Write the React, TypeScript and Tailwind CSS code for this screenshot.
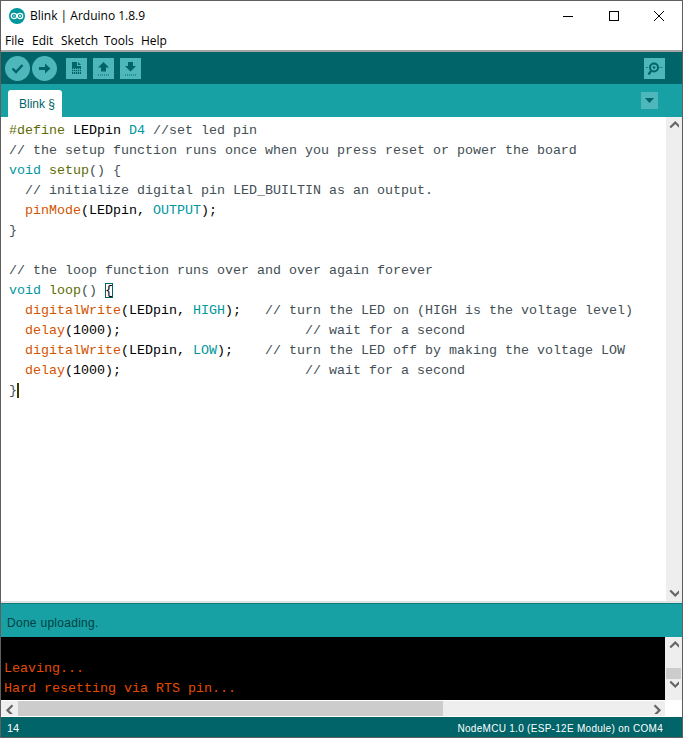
import type { ReactNode } from "react";

const kw = "text-[#00979c]";
const fn = "text-[#d35400]";
const ty = "text-[#5e6d03]";
const cm = "text-[#434f54]";

function K({ c, children }: { c: string; children: ReactNode }) {
  return <span className={c}>{children}</span>;
}

function Logo() {
  return (
    <svg width="16" height="16" viewBox="0 0 16 16">
      <circle cx="8" cy="8" r="8" fill="#00979c" />
      <circle cx="5" cy="8" r="2.7" fill="none" stroke="#fff" strokeWidth="1.2" />
      <circle cx="11" cy="8" r="2.7" fill="none" stroke="#fff" strokeWidth="1.2" />
      <path d="M4 8h2M10 8h2M11 7v2" stroke="#fff" strokeWidth="0.8" />
    </svg>
  );
}

function ToolCircle({ children }: { children: ReactNode }) {
  return (
    <div className="flex h-[25px] w-[25px] items-center justify-center rounded-full bg-[#4db7bb]">
      {children}
    </div>
  );
}

function ToolSquare({ children }: { children: ReactNode }) {
  return <div className="flex h-[21px] w-[21px] items-center justify-center bg-[#4db7bb]">{children}</div>;
}

function ArrowUpDown({ down }: { down?: boolean }) {
  return (
    <svg width="13" height="15" viewBox="0 0 13 15" fill="#006468">
      {down ? <path d="M4 1h5v4h3l-5.500 5.500L1 5h3z" /> : <path d="M6.500 1 12 6.500H9v4H4v-4H1z" />}
      <path d="M1 14h11" stroke="#006468" strokeDasharray="1 1" fill="none" />
    </svg>
  );
}

function Chevron({ dir }: { dir: "up" | "down" | "left" | "right" }) {
  const d = {
    up: "M1 6 5 2l4 4",
    down: "M1 2l4 4 4-4",
    left: "M6 1 2 5l4 4",
    right: "M2 1l4 4-4 4",
  }[dir];
  return (
    <svg width="10" height="10" viewBox="0 0 8 8" className="shrink-0">
      <path d={d} fill="none" stroke="#666" strokeWidth="1.800" />
    </svg>
  );
}

const lines: ReactNode[] = [
  <>
    <K c={ty}>#define</K> LEDpin <K c={kw}>D4</K> <K c={cm}>//set led pin</K>
  </>,
  <K c={cm}>// the setup function runs once when you press reset or power the board</K>,
  <>
    <K c={kw}>void</K> <K c={ty}>setup</K>
    <K c={cm}>() {"{"}</K>
  </>,
  <K c={cm}>  // initialize digital pin LED_BUILTIN as an output.</K>,
  <>
    {"  "}
    <K c={fn}>pinMode</K>(LEDpin, <K c={kw}>OUTPUT</K>);
  </>,
  <K c={cm}>{"}"}</K>,
  " ",
  <K c={cm}>// the loop function runs over and over again forever</K>,
  <>
    <K c={kw}>void</K> <K c={ty}>loop</K>
    <K c={cm}>() </K>
    <span className="outline outline-1 -outline-offset-1 outline-[#006468]">{"{"}</span>
  </>,
  <>
    {"  "}
    <K c={fn}>digitalWrite</K>(LEDpin, <K c={kw}>HIGH</K>);{"   "}
    <K c={cm}>// turn the LED on (HIGH is the voltage level)</K>
  </>,
  <>
    {"  "}
    <K c={fn}>delay</K>(1000);{"                       "}
    <K c={cm}>// wait for a second</K>
  </>,
  <>
    {"  "}
    <K c={fn}>digitalWrite</K>(LEDpin, <K c={kw}>LOW</K>);{"    "}
    <K c={cm}>// turn the LED off by making the voltage LOW</K>
  </>,
  <>
    {"  "}
    <K c={fn}>delay</K>(1000);{"                       "}
    <K c={cm}>// wait for a second</K>
  </>,
  <span className="border-r-2 border-[#3c3c00]">
    <K c={cm}>{"}"}</K>
  </span>,
];

export default function App() {
  return (
    <div className="flex h-[738px] w-[683px] flex-col overflow-hidden border border-[#5f5f5f] bg-white font-['Open_Sans','Noto_Sans',sans-serif]">
      {/* title bar */}
      <div className="flex h-[29px] shrink-0 items-center">
        <div className="ml-[8px] flex items-center gap-[5px]">
          <Logo />
          <span className="text-[12px] text-black">Blink | Arduino 1.8.9</span>
        </div>
        <div className="ml-auto flex items-center">
          <div className="flex w-[46px] justify-center">
            <svg width="10" height="10" viewBox="0 0 10 10"><path d="M0 5.500h10" stroke="#000" /></svg>
          </div>
          <div className="flex w-[45px] justify-center">
            <svg width="10" height="10" viewBox="0 0 10 10"><rect x=".5" y=".5" width="9" height="9" fill="none" stroke="#000" /></svg>
          </div>
          <div className="flex w-[46px] justify-center pr-[1px]">
            <svg width="10" height="10" viewBox="0 0 10 10"><path d="M0 0l10 10M10 0 0 10" stroke="#000" /></svg>
          </div>
        </div>
      </div>

      {/* menu */}
      <div className="flex h-[20px] shrink-0 items-center pl-[4px] pt-[2px] text-[12px] text-black">
        <span className="w-[27px]">File</span>
        <span className="w-[29px]">Edit</span>
        <span className="w-[43px]">Sketch</span>
        <span className="w-[37px]">Tools</span>
        <span>Help</span>
      </div>
      <div className="h-[2px] shrink-0 bg-[#a5a5a5]" />

      {/* toolbar */}
      <div className="flex h-[32px] shrink-0 items-center bg-[#006468] pl-[4px] pr-[16px]">
        <div className="flex gap-[2px]">
          <ToolCircle>
            <svg width="13" height="11" viewBox="0 0 13 11"><path d="M1.500 5.500 5 9l6.500-7" fill="none" stroke="#006468" strokeWidth="2.400" /></svg>
          </ToolCircle>
          <ToolCircle>
            <svg width="13" height="11" viewBox="0 0 13 11" fill="#006468"><path d="M1 4h6V.5l5.500 5L7 10.500V7H1z" /></svg>
          </ToolCircle>
        </div>
        <div className="ml-[9px] flex gap-[6px]">
          <ToolSquare>
            <svg width="13" height="16" viewBox="0 0 13 16">
              <path d="M2 2h5v4h4v8H2z" fill="#006468" />
              <path d="M8 2l3 3H8z" fill="#006468" />
              <path d="M3.500 8v6M5.500 8v6M7.500 8v6M9.500 8v6M2 9.500h9M2 11.500h9" stroke="#4db7bb" strokeWidth=".7" />
            </svg>
          </ToolSquare>
          <ToolSquare>
            <ArrowUpDown />
          </ToolSquare>
          <ToolSquare>
            <ArrowUpDown down />
          </ToolSquare>
        </div>
        <div className="ml-auto -translate-x-[1px]">
          <ToolSquare>
            <svg width="17" height="15" viewBox="0 0 17 15">
              <circle cx="8" cy="6.500" r="4" fill="none" stroke="#006468" strokeWidth="2" />
              <circle cx="8" cy="6.500" r="1.300" fill="#006468" />
              <path d="M5 10 2.500 13.500" stroke="#006468" strokeWidth="2.200" />
              <path d="M0 6.500h1.500M13.500 6.500h1M15.500 6.500h1" stroke="#006468" />
            </svg>
          </ToolSquare>
        </div>
      </div>

      {/* tabs */}
      <div className="flex h-[33px] shrink-0 items-end bg-[#17a1a5] pl-[7px] pr-[24px]">
        <div className="flex h-[27px] w-[54px] items-center rounded-t-[3px] bg-white pl-[11px] font-['Liberation_Sans',sans-serif] text-[12px] text-[#006468]">
          Blink §
        </div>
        <div className="mb-[8px] ml-auto flex h-[17px] w-[17px] items-center justify-center bg-[#4db7bb]">
          <svg width="9" height="5" viewBox="0 0 9 5"><path d="M0 0h9L4.500 5z" fill="#006468" /></svg>
        </div>
      </div>

      {/* editor */}
      <div className="flex min-h-0 flex-1">
        <div className="min-w-0 flex-1 overflow-hidden pl-[8px] pt-[4px] font-['Liberation_Mono',monospace] text-[13.33px] leading-[20px] text-black">
          {lines.map((l, i) => (
            <div key={i} className="h-[20px] whitespace-pre">
              {l}
            </div>
          ))}
        </div>
        <div className="flex w-[16px] shrink-0 flex-col items-center justify-between bg-[#eeeeee] py-[3px]">
          <Chevron dir="up" />
          <Chevron dir="down" />
        </div>
      </div>
      <div className="h-[2px] shrink-0 bg-[#e2e2e2]" />

      {/* status */}
      <div className="flex h-[34px] shrink-0 items-center border-t border-[#0e7c80] bg-[#17a1a5] pl-[6px] pt-[4px] font-['Liberation_Sans',sans-serif] text-[12px] tracking-[0.28px] text-[#003f42]">
        Done uploading.
      </div>

      {/* console */}
      <div className="flex h-[63px] shrink-0">
        <div className="min-w-0 flex-1 bg-black pl-[3px] pt-[22px] font-['Liberation_Mono',monospace] text-[13.33px] leading-[20px] text-[#e34c00]">
          <div>Leaving...</div>
          <div>Hard resetting via RTS pin...</div>
        </div>
        <div className="flex w-[17px] shrink-0 flex-col items-center bg-[#eeeeee] py-[3px]">
          <Chevron dir="up" />
          <div className="mt-[18px] h-[11px] w-[15px] shrink-0 bg-[#cccccc]" />
          <Chevron dir="down" />
        </div>
      </div>

      {/* horizontal scroll */}
      <div className="mt-[1px] flex h-[15px] shrink-0">
        <div className="flex w-[17px] items-center justify-center bg-[#eeeeee]">
          <Chevron dir="left" />
        </div>
        <div className="w-[425px] bg-[#cccccc]" />
        <div className="flex w-[222px] items-center justify-end bg-[#eeeeee] pr-[3px]">
          <Chevron dir="right" />
        </div>
      </div>
      <div className="h-[1px] shrink-0" />

      {/* footer */}
      <div className="flex h-[20px] shrink-0 items-center justify-between bg-[#006468] pl-[6px] pr-[19px] pt-[2px] font-['Liberation_Sans',sans-serif] text-[10px] text-white">
        <span className="text-[11px]">14</span>
        <span className="tracking-[0.29px]">NodeMCU 1.0 (ESP-12E Module) on COM4</span>
      </div>
    </div>
  );
}
